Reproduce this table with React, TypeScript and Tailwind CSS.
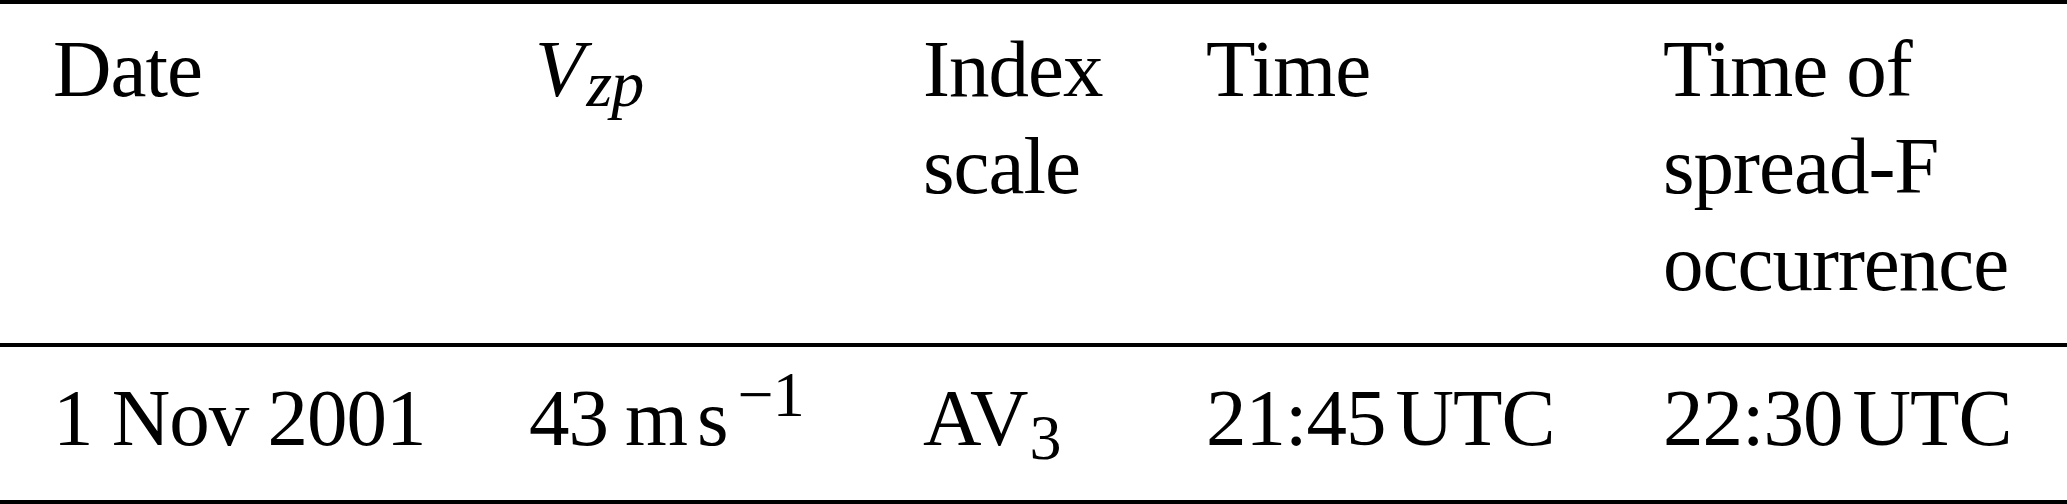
export default function App() {
  return (
    <div className="w-[2067px] h-[504px] bg-white text-black font-['Liberation_Serif','Times_New_Roman',serif] text-[81px] tracking-[-1px]">
      <div className="h-[4px] bg-black" />

      <div className="grid grid-cols-[476px_394px_283px_457px_1fr] pl-[53px] pt-[17px] pb-[31px] leading-[97px] items-start">
        <div>Date</div>
        <div className="pl-[6px]">
          <span className="italic">V</span>
          <span className="relative top-[10px] ml-[3px] text-[66px] leading-none italic">zp</span>
        </div>
        <div>
          Index
          <br />
          scale
        </div>
        <div>Time</div>
        <div>
          Time of
          <br />
          spread-F
          <br />
          occurrence
        </div>
      </div>

      <div className="h-[4px] bg-black" />

      <div className="grid grid-cols-[476px_394px_283px_457px_1fr] pl-[53px] pt-[23px] pb-[33px] leading-[97px] items-start whitespace-nowrap">
        <div>1 Nov 2001</div>
        <div>
          43<span className="ml-[17px]">m</span>
          <span className="ml-[10px]">s</span>
          <span className="relative top-[-29px] ml-[10px] text-[64px] leading-none">−1</span>
        </div>
        <div>
          AV<span className="relative top-[14px] ml-[2px] text-[64px] leading-none">3</span>
        </div>
        <div>
          21:45<span className="ml-[10px]">UTC</span>
        </div>
        <div>
          22:30<span className="ml-[10px]">UTC</span>
        </div>
      </div>

      <div className="h-[4px] bg-black" />
    </div>
  )
}
